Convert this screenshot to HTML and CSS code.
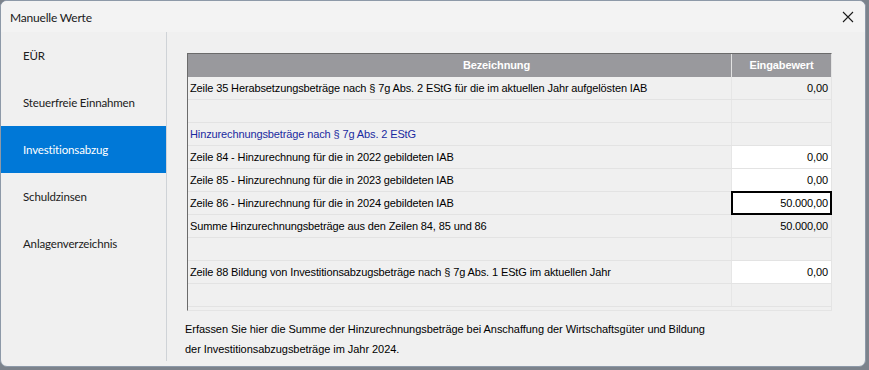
FILE: index.html
```html
<!DOCTYPE html>
<html lang="de">
<head>
<meta charset="UTF-8">
<meta name="viewport" content="width=device-width, initial-scale=1.0">
<title>Manuelle Werte</title>
<link rel="stylesheet" href="styles.css">
</head>
<body>

<div class="dialog">
  <!-- Title bar -->
  <div class="titlebar">
    <span class="title">Manuelle Werte</span>
    <svg class="close" width="12" height="12" viewBox="0 0 12 12">
      <path d="M1 1 L11 11 M11 1 L1 11" stroke="#1b1b1b" stroke-width="1.1" fill="none"/>
    </svg>
  </div>

  <div class="main">
    <!-- Navigation -->
    <div class="nav">
      <div class="nav-item">EÜR</div>
      <div class="nav-item">Steuerfreie Einnahmen</div>
      <div class="nav-item active">Investitionsabzug</div>
      <div class="nav-item">Schuldzinsen</div>
      <div class="nav-item">Anlagenverzeichnis</div>
    </div>

    <!-- Content -->
    <div class="content">
      <div class="grid">
        <div class="row head">
          <div class="cell label">Bezeichnung</div>
          <div class="cell value">Eingabewert</div>
        </div>
        <div class="row">
          <div class="cell label">Zeile 35 Herabsetzungsbeträge nach § 7g Abs. 2 EStG für die im aktuellen Jahr aufgelösten IAB</div>
          <div class="cell value">0,00</div>
        </div>
        <div class="row">
          <div class="cell label"></div>
          <div class="cell value"></div>
        </div>
        <div class="row">
          <div class="cell label group">Hinzurechnungsbeträge nach § 7g Abs. 2 EStG</div>
          <div class="cell value"></div>
        </div>
        <div class="row">
          <div class="cell label">Zeile 84 - Hinzurechnung für die in 2022 gebildeten IAB</div>
          <div class="cell value input">0,00</div>
        </div>
        <div class="row">
          <div class="cell label">Zeile 85 - Hinzurechnung für die in 2023 gebildeten IAB</div>
          <div class="cell value input">0,00</div>
        </div>
        <div class="row">
          <div class="cell label">Zeile 86 - Hinzurechnung für die in 2024 gebildeten IAB</div>
          <div class="cell value input focus">50.000,00</div>
        </div>
        <div class="row">
          <div class="cell label">Summe Hinzurechnungsbeträge aus den Zeilen 84, 85 und 86</div>
          <div class="cell value">50.000,00</div>
        </div>
        <div class="row">
          <div class="cell label"></div>
          <div class="cell value"></div>
        </div>
        <div class="row">
          <div class="cell label">Zeile 88 Bildung von Investitionsabzugsbeträge nach § 7g Abs. 1 EStG im aktuellen Jahr</div>
          <div class="cell value input">0,00</div>
        </div>
        <div class="row">
          <div class="cell label"></div>
          <div class="cell value"></div>
        </div>
      </div>

      <p class="hint">Erfassen Sie hier die Summe der Hinzurechnungsbeträge bei Anschaffung der Wirtschaftsgüter und Bildung<br>der Investitionsabzugsbeträge im Jahr 2024.</p>
    </div>
  </div>
</div>

</body>
</html>
```

FILE: styles.css
```css
body {
  margin: 0;
  padding: 0;
  background-color: #7c838c;
  font-family: "Liberation Sans", Arial, sans-serif;
}
.dialog {
  width: 864px;
  height: 365px;
  border: 1px solid #8d99a8;
  border-radius: 7px;
  background-color: #f0f0f0;
  overflow: hidden;
  display: flex;
  flex-direction: column;
}
.titlebar {
  height: 31px;
  flex-shrink: 0;
  display: flex;
  align-items: center;
  justify-content: space-between;
  padding: 0 11px 0 9px;
  background-color: #f3f3f3;
}
.title {
  font-family: Lato, "Noto Sans", sans-serif;
  font-size: 12px;
  letter-spacing: -0.2px;
  color: #1a1a1a;
  padding-top: 1px;
}
.main {
  flex-grow: 1;
  display: flex;
}
.nav {
  width: 165px;
  flex-shrink: 0;
  border-right: 1px solid #cfd3d7;
  margin-bottom: 5px;
}
.nav-item {
  height: 47px;
  line-height: 47px;
  padding-left: 22px;
  font-family: Lato, "Noto Sans", sans-serif;
  font-size: 11.5px;
  letter-spacing: -0.15px;
  color: #202020;
}
.nav-item.active {
  background-color: #0078d7;
  color: #fff;
}
.content {
  flex-grow: 1;
  padding: 21px 0 0 20px;
}
.grid {
  width: 643px;
  height: 256px;
  border-top: 1px solid #6b6b6b;
  border-left: 1px solid #6b6b6b;
  border-right: 1px solid #e4e4e4;
  border-bottom: 1px solid #e4e4e4;
  font-size: 11px;
  letter-spacing: -0.12px;
  color: #000;
}
.row {
  display: grid;
  grid-template-columns: 543px 99px;
  column-gap: 1px;
  height: 22px;
  border-bottom: 1px solid #e3e3e3;
  background-color: #e6e6e6;
}
.row.head {
  height: 23px;
  border-bottom: none;
  background-color: #e2e2e2;
}
.cell {
  line-height: 22px;
  white-space: nowrap;
  overflow: hidden;
  background-color: #f0f0f0;
}
.label {
  padding-left: 2px;
}
.value {
  text-align: right;
  padding-right: 3px;
}
.head .cell {
  background-color: #99999d;
  color: #fff;
  font-weight: bold;
  line-height: 23px;
}
.head .label {
  text-align: center;
  padding-left: 74px;
}
.head .value {
  text-align: center;
  padding-right: 0;
}
.group {
  color: #1a2aa0;
}
.input {
  background-color: #fff;
}
.focus {
  outline: 2px solid #000;
  outline-offset: -1px;
  position: relative;
}
.hint {
  margin: 8px 0 0 -2px;
  font-size: 11px;
  letter-spacing: -0.05px;
  line-height: 20px;
  color: #000;
}
```
